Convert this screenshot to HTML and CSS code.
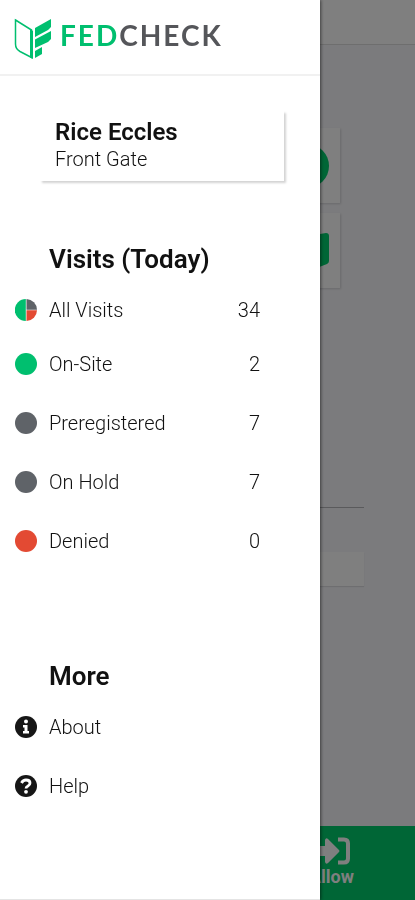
FILE: index.html
```html
<!DOCTYPE html>
<html lang="en">
<head>
<meta charset="utf-8">
<meta name="viewport" content="width=device-width, initial-scale=1">
<title>FedCheck</title>
<link rel="stylesheet" href="styles.css">
</head>
<body>
<div class="page">
  <header class="topbar"></header>
  <main class="content">
    <div class="tiles">
      <div class="tile"><svg width="44" height="44" viewBox="0 0 44 44" aria-hidden="true"><circle cx="22" cy="22" r="22"/></svg></div>
      <div class="tile"><svg width="44" height="44" viewBox="0 0 44 44" aria-hidden="true"><path d="M2 4 20 8V42L2 35Q0 34 0 32V7Q0 3 2 4ZM24 8 35 5 41 4Q44 4 44 7V32Q44 34 42 35L24 42Z"/></svg></div>
    </div>
    <hr class="rule">
    <div class="field"></div>
  </main>
  <footer class="actionbar">
    <button class="allow" type="button">
      <svg width="36" height="28" viewBox="0 0 36 28" aria-hidden="true"><path d="M0 9H10V3Q11 0 13 2L24 13Q25 14 24 15L13 26Q11 28 10 25V19H0Z"/><path d="M23 2.500H29Q33 2.500 33 6.500V21.500Q33 25.500 29 25.500H23" fill="none" stroke="currentColor" stroke-width="4"/></svg>
      <span>Allow</span>
    </button>
  </footer>
</div>
<div class="backdrop"></div>
<aside class="drawer">
  <div class="brand">
    <svg class="mark" width="38" height="42" viewBox="0 0 38 42" aria-hidden="true">
      <path d="M1.500 2 17.500 12V39.500L6 33.500Q1.500 31 1.500 26Z" fill="none" stroke="#00bf6f" stroke-width="1.500"/>
      <path d="M16 11 19 13V41L16 39.500Z"/>
      <path d="M21 10 37 1V9L34 12 21 19ZM21 21.500 37 13V21L34 24 21 30ZM21 33 28 29V36L21 40Z"/>
    </svg>
    <span class="wordmark"><span class="fed">FED</span>CHECK</span>
  </div>
  <div class="site">
    <strong class="site-name">Rice Eccles</strong>
    <span class="site-gate">Front Gate</span>
  </div>
  <nav class="menu">
    <section>
      <h2>Visits (Today)</h2>
      <ul class="visits">
        <li><a href="#all"><svg class="icon" viewBox="0 0 22 22" aria-hidden="true"><path fill="#00bf6f" d="M10.800 0A11 11 0 0 0 10.800 22Z"/><path fill="#5f6368" d="M11.500 0A11 11 0 0 1 22 10.800H11.500Z"/><path fill="#e34a33" d="M11.500 11.200H22A11 11 0 0 1 11.500 22Z"/></svg><span>All Visits</span><span class="count">34</span></a></li>
        <li><a href="#onsite"><i class="icon dot green"></i><span>On-Site</span><span class="count">2</span></a></li>
        <li><a href="#preregistered"><i class="icon dot gray"></i><span>Preregistered</span><span class="count">7</span></a></li>
        <li><a href="#hold"><i class="icon dot gray"></i><span>On Hold</span><span class="count">7</span></a></li>
        <li><a href="#denied"><i class="icon dot red"></i><span>Denied</span><span class="count">0</span></a></li>
      </ul>
    </section>
    <section>
      <h2>More</h2>
      <ul>
        <li><a href="#about"><svg class="icon" viewBox="0 0 22 22" aria-hidden="true"><circle cx="11" cy="11" r="11" fill="#161616"/><circle cx="11" cy="5.500" r="2" fill="#fff"/><path fill="#fff" d="M8 9H12.500V15H14V17.500H8V15H9.500V11.500H8Z"/></svg><span>About</span></a></li>
        <li><a href="#help"><svg class="icon" viewBox="0 0 22 22" aria-hidden="true"><circle cx="11" cy="11" r="11" fill="#161616"/><path d="M6.500 8Q8 5 11 5 15 5 15 8 15 10 13 11 11 12 11 13.500" fill="none" stroke="#fff" stroke-width="2.800"/><circle cx="11" cy="16.800" r="1.900" fill="#fff"/></svg><span>Help</span></a></li>
      </ul>
    </section>
  </nav>
</aside>
</body>
</html>
```
FILE: styles.css
```css
* { box-sizing: border-box; }

body {
  margin: 0;
  font-family: Roboto, "Liberation Sans", sans-serif;
  font-size: 20px;
  font-weight: 300;
  color: #111;
}

.page {
  display: flex;
  flex-direction: column;
  min-height: 100vh;
  background: #f7f7fa;
}

.topbar {
  height: 45px;
  background: #fff;
  border-bottom: 1px solid #dcdcdc;
}

.content {
  flex: 1;
  padding: 83px 51px 0;
}

.tiles {
  display: flex;
  flex-direction: column;
  gap: 10px;
  margin: 0 24px;
}

.tile {
  display: flex;
  align-items: center;
  justify-content: flex-end;
  height: 75px;
  padding-right: 11px;
  background: #fff;
  box-shadow: 1px 1px 2px #d4d4d8;
  fill: #00cc6c;
}

.rule {
  height: 1px;
  margin: 219px 0 44px;
  border: 0;
  background: #b4b4b8;
}

.field {
  height: 34px;
  background: #fff;
  box-shadow: 0 1px 1px #dcdce0;
}

.actionbar {
  display: flex;
  justify-content: flex-end;
  height: 74px;
  padding-right: 61px;
  background: #00cc6c;
}

.allow {
  display: flex;
  flex-direction: column;
  align-items: flex-end;
  gap: 2px;
  padding: 11px 0 0;
  border: 0;
  background: none;
  color: #fff;
  fill: currentColor;
  font: bold 18px/20px Roboto, sans-serif;
}

.allow svg { margin-right: 3px; }

.backdrop {
  position: fixed;
  inset: 0;
  background: rgba(0, 0, 0, .5);
}

.drawer {
  position: fixed;
  inset: 0 auto 0 0;
  width: 320px;
  max-width: 85vw;
  overflow-y: auto;
  background: #fff;
  border-bottom: 1px solid #e4e4e4;
  box-shadow: 1px 0 3px rgba(0, 0, 0, .5);
}

.brand {
  display: flex;
  align-items: flex-start;
  gap: 8px;
  height: 76px;
  padding: 18px 14px 0;
  border-bottom: 2px solid #f1f1f1;
}

.mark { fill: #00bf6f; }

.wordmark {
  color: #55565a;
  font: bold 28px/34px Lato, sans-serif;
  letter-spacing: 2px;
}

.fed { color: #00bf6f; }

.site {
  display: flex;
  flex-direction: column;
  height: 70px;
  margin: 35px 36px 0 40px;
  padding: 7px 15px;
  box-shadow: 2px 2px 2px #d4d4d4;
}

.site-name {
  font-size: 24px;
  font-weight: 600;
  line-height: 28px;
}

.site-gate { line-height: 26px; }

.menu {
  display: flex;
  flex-direction: column;
  gap: 85px;
  padding: 57px 60px 0 15px;
}

h2 {
  margin: 0 0 0 34px;
  font-size: 26px;
  font-weight: 600;
  line-height: 42px;
}

ul {
  margin: 0;
  padding: 0;
  list-style: none;
}

.visits li:first-child { margin-bottom: -5px; }

.menu a {
  display: flex;
  align-items: center;
  gap: 12px;
  height: 59px;
  color: inherit;
  text-decoration: none;
}

.icon {
  flex: none;
  width: 22px;
  height: 22px;
}

.dot { border-radius: 50%; }
.green { background: #00bf6f; }
.gray { background: #5f6368; }
.red { background: #e34a33; }

.count { margin-left: auto; }
```
